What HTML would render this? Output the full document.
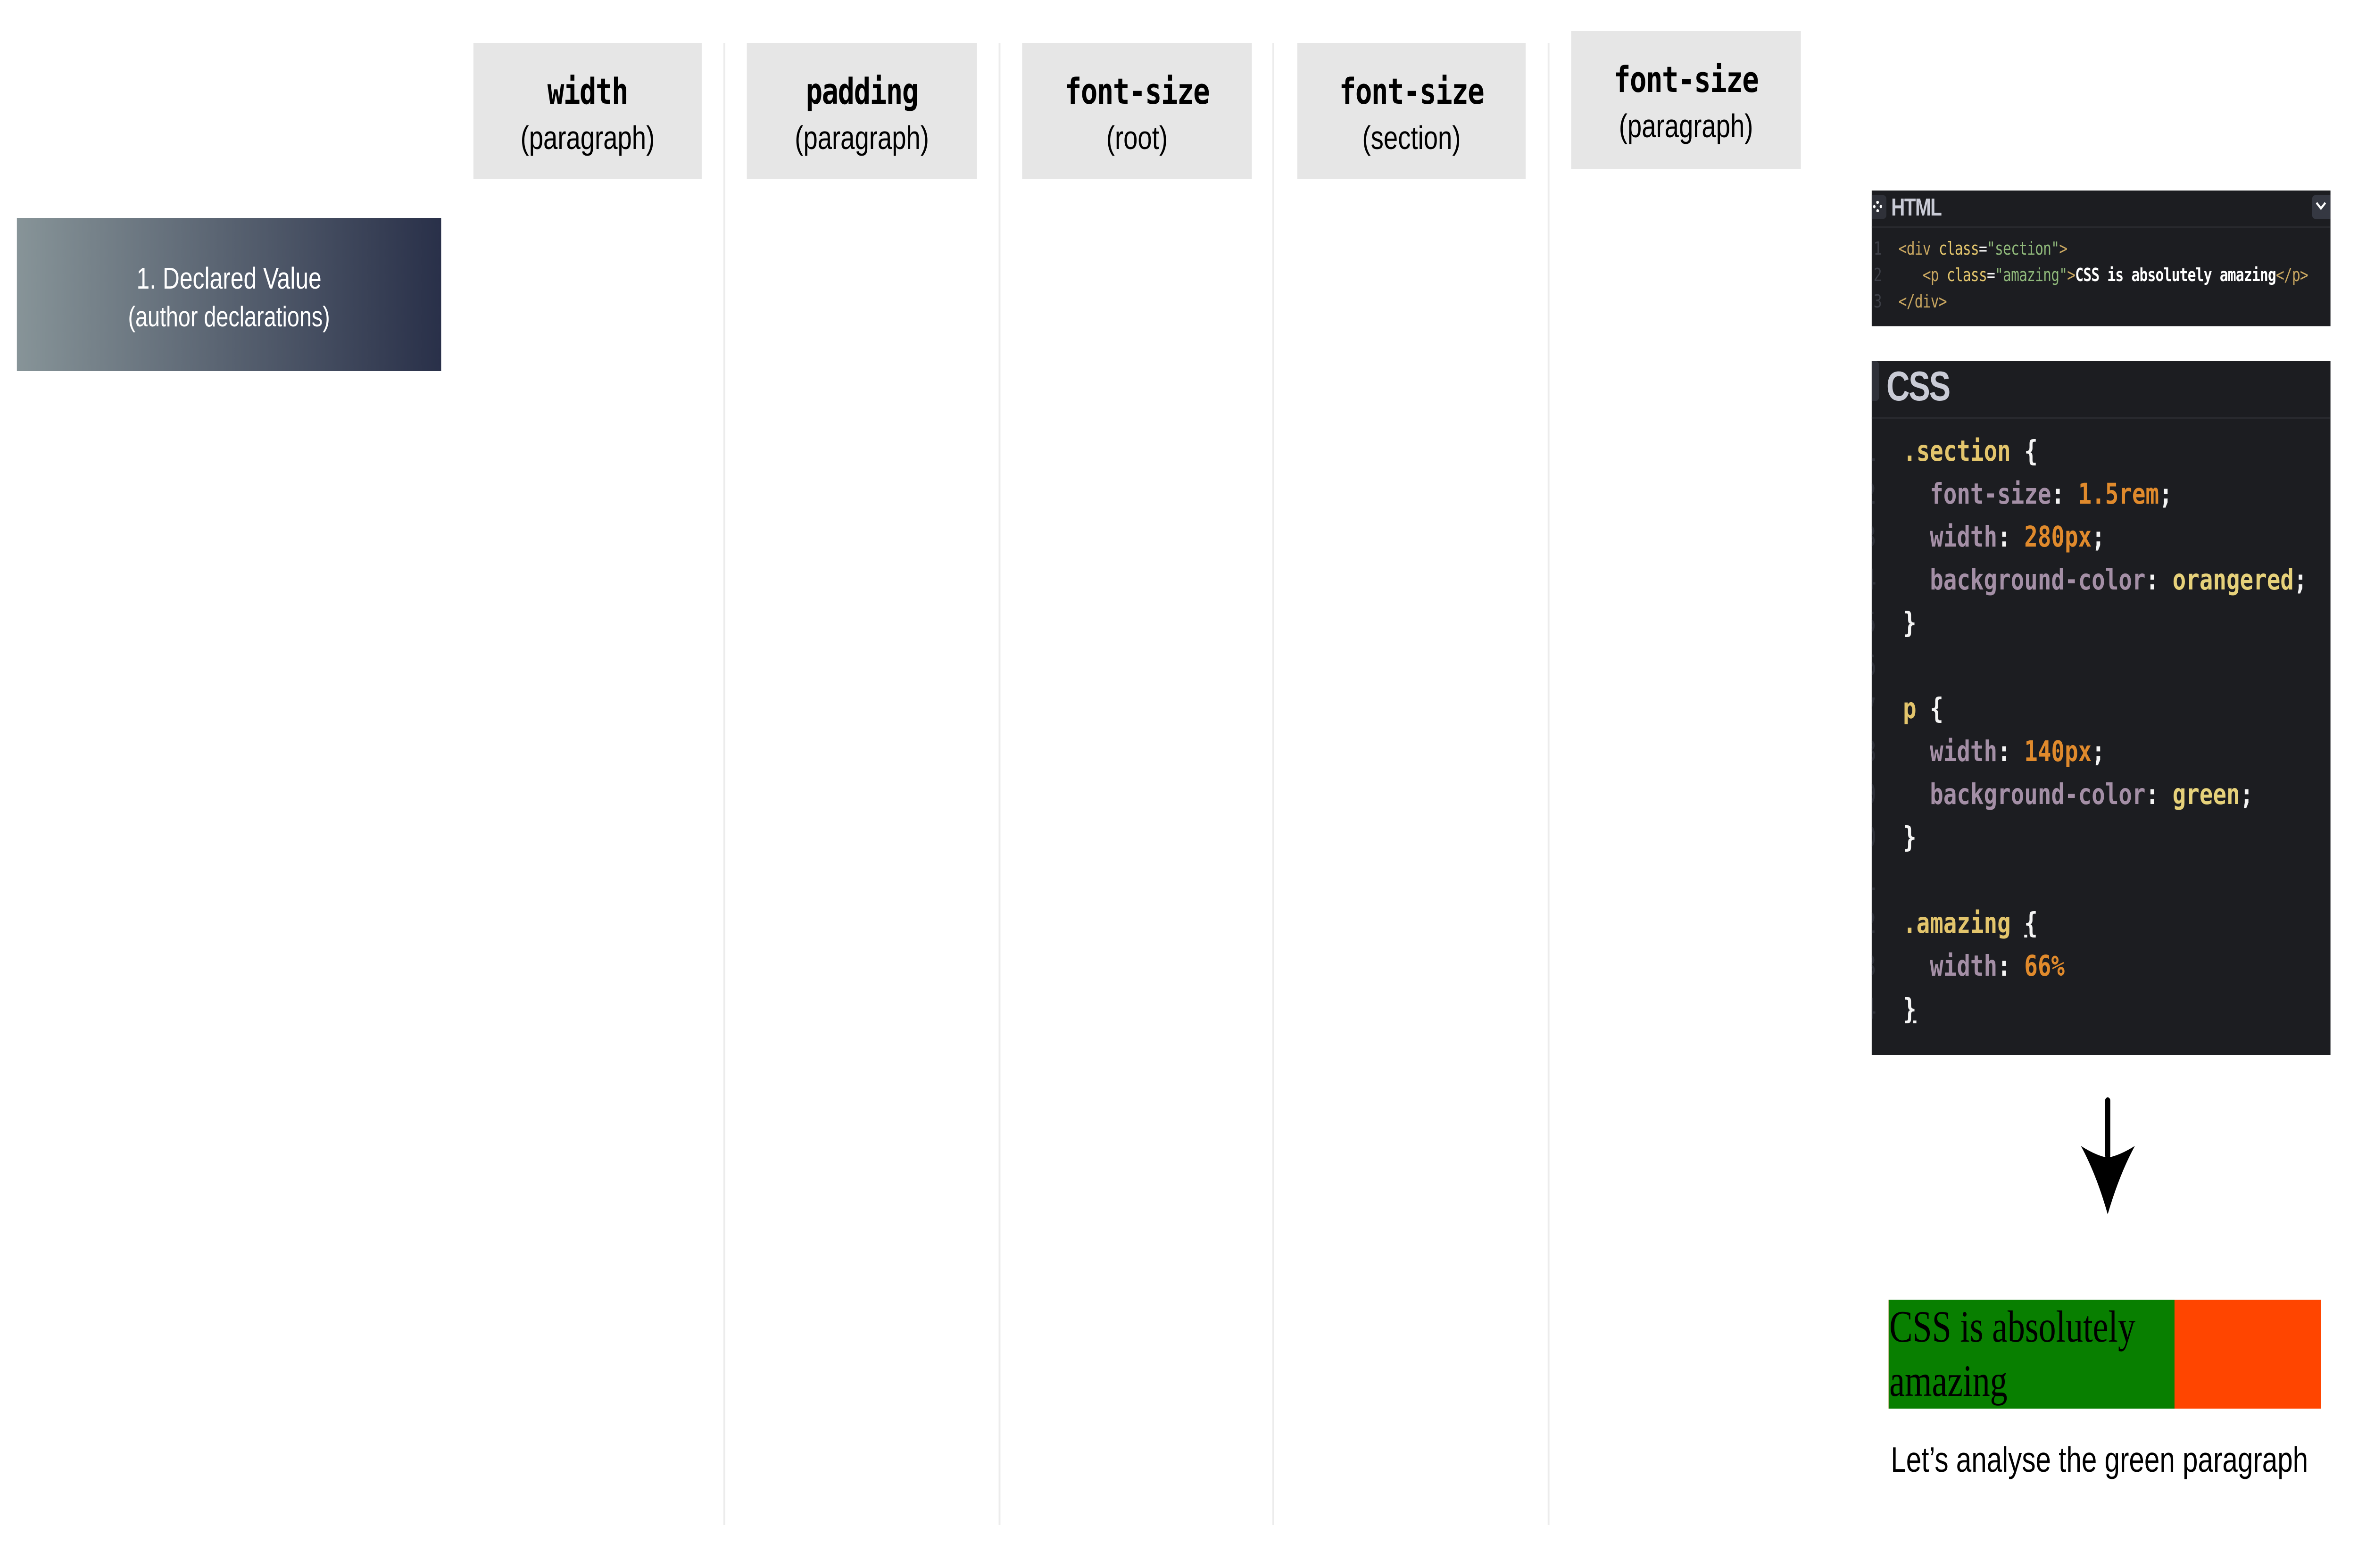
<!DOCTYPE html>
<html><head><meta charset="utf-8"><style>
*{margin:0;padding:0;box-sizing:border-box}
html,body{width:100%;height:100%;overflow:hidden;background:#fff}
#stage{position:fixed;left:0;top:0;width:100vw;height:100vh;display:block}
#pg{width:6425px;height:3325px;background:#fff;position:relative;overflow:hidden;font-family:"Liberation Sans",sans-serif}
.a{position:absolute}
.hd{position:absolute;background:#e6e6e6;text-align:center;color:#000}
.hd .t{position:absolute;left:0;right:0;top:58px;font:bold 76px "DejaVu Sans Mono","Liberation Mono",monospace;line-height:90px;letter-spacing:-2px}
.hd .s{position:absolute;left:0;right:0;top:156px;font-size:70px;line-height:90px}
.dv{position:absolute;top:91px;height:3143px;width:5px;background:#ececec}
pre{font-family:"DejaVu Sans Mono","Liberation Mono",monospace;white-space:pre;position:absolute}
.y{color:#e3c56c}.p{color:#a48fa6}.n{color:#e08a2c}.w{color:#f4f4f4}.k{color:#e6d17a}
.tg{color:#c8a660}.at{color:#e3c56c}.st{color:#8fb87a}.tx{color:#fff;font-weight:bold}
</style></head><body>
<svg id="stage" xmlns="http://www.w3.org/2000/svg" viewBox="0 0 6425 3325" preserveAspectRatio="none">
<foreignObject x="0" y="0" width="6425" height="3325">
<div xmlns="http://www.w3.org/1999/xhtml" id="pg">

<div class="a" style="left:46px;top:462px;width:1156px;height:325px;background:linear-gradient(90deg,#879498,#293049);color:#fff;text-align:center">
<div class="a" style="left:0;right:0;top:88px;font-size:64px;line-height:80px">1. Declared Value</div>
<div class="a" style="left:0;right:0;top:170px;font-size:60px;line-height:80px">(author declarations)</div>
</div>

<div class="hd" style="left:1290px;top:91px;width:622px;height:288px"><div class="t">width</div><div class="s">(paragraph)</div></div>
<div class="hd" style="left:2035px;top:91px;width:627px;height:288px"><div class="t">padding</div><div class="s">(paragraph)</div></div>
<div class="hd" style="left:2785px;top:91px;width:626px;height:288px"><div class="t">font-size</div><div class="s">(root)</div></div>
<div class="hd" style="left:3535px;top:91px;width:622px;height:288px"><div class="t">font-size</div><div class="s">(section)</div></div>
<div class="hd" style="left:4281px;top:66px;width:626px;height:292px"><div class="t">font-size</div><div class="s">(paragraph)</div></div>

<div class="dv" style="left:1971px"></div>
<div class="dv" style="left:2721px"></div>
<div class="dv" style="left:3467px"></div>
<div class="dv" style="left:4217px"></div>

<div class="a" style="left:5100px;top:404px;width:1250px;height:288px;background:#1c1d21;overflow:hidden">
<div class="a" style="left:0;top:10px;width:40px;height:50px;background:#2f3139;border-radius:0 8px 8px 0"></div>
<div class="a" style="left:4px;top:22px;width:24px;height:24px;border-radius:50%;border:7px dotted #fff"></div>
<div class="a" style="left:53px;top:6px;font-weight:bold;font-size:52px;line-height:60px;color:#c9cbd6;letter-spacing:-2px">HTML</div>
<div class="a" style="left:1200px;top:10px;width:50px;height:50px;background:#353842;border-radius:8px 0 0 8px"></div>
<svg class="a" style="left:1208px;top:22px" width="36" height="24"><path d="M4 4 L16 16 L28 4" stroke="#fff" stroke-width="5" fill="none"/></svg>
<div class="a" style="left:0;top:76px;width:1250px;height:4px;background:#28292e"></div>
<pre style="left:5px;top:95px;font-size:38px;line-height:56px;color:#3b3d45">1
2
3</pre>
<div class="a" style="left:73px;top:95px;width:1170px;height:180px;overflow:hidden">
<pre style="left:0;top:0;font-size:38px;line-height:56px;letter-spacing:-1px"><span class="tg">&lt;div</span> <span class="at">class</span><span class="w">=</span><span class="st">"section"</span><span class="tg">&gt;</span>
   <span class="tg">&lt;p</span> <span class="at">class</span><span class="w">=</span><span class="st">"amazing"</span><span class="tg">&gt;</span><span class="tx">CSS is absolutely amazing</span><span class="tg">&lt;/p&gt;</span>
<span class="tg">&lt;/div&gt;</span></pre>
</div>
</div>

<div class="a" style="left:5100px;top:766px;width:1250px;height:1471px;background:#1c1d21;overflow:hidden">
<div class="a" style="left:0;top:0;width:20px;height:84px;background:#2f3139;border-radius:0 8px 8px 0"></div>
<div class="a" style="left:40px;top:8px;font-weight:bold;font-size:88px;line-height:90px;color:#c9cbd6;letter-spacing:-3px">CSS</div>
<div class="a" style="left:0;top:118px;width:1250px;height:4px;background:#28292e"></div>
<div class="a" style="left:0;top:145px;width:20px;height:1300px;overflow:hidden">
<pre style="left:-24px;top:0;font-size:61px;line-height:91px;color:#2e3038">1
2
3
4
5
6
7
8
9
0
1
2
3
4</pre>
</div>
<div class="a" style="left:85px;top:145px;width:1160px;height:1300px;overflow:hidden">
<pre style="left:0;top:0;font-size:61px;line-height:91px;font-weight:bold"><span class="y">.section</span> <span class="w">{</span>
  <span class="p">font-size</span><span class="w">:</span> <span class="n">1.5rem</span><span class="w">;</span>
  <span class="p">width</span><span class="w">:</span> <span class="n">280px</span><span class="w">;</span>
  <span class="p">background-color</span><span class="w">:</span> <span class="k">orangered</span><span class="w">;</span>
<span class="w">}</span>

<span class="y">p</span> <span class="w">{</span>
  <span class="p">width</span><span class="w">:</span> <span class="n">140px</span><span class="w">;</span>
  <span class="p">background-color</span><span class="w">:</span> <span class="k">green</span><span class="w">;</span>
<span class="w">}</span>

<span class="y">.amazing</span> <span class="w" style="text-decoration:underline">{</span>
  <span class="p">width</span><span class="w">:</span> <span class="n">66%</span>
<span class="w" style="text-decoration:underline">}</span></pre>
</div>
</div>

<svg class="a" style="left:5660px;top:2320px" width="170" height="270">
<line x1="83" y1="14" x2="83" y2="130" stroke="#000" stroke-width="14" stroke-linecap="round"/>
<path d="M10 110 Q50 130 83 135 Q116 130 157 110 Q115 170 83 255 Q52 170 10 110 Z" fill="#000"/>
</svg>

<div class="a" style="left:5146px;top:2756px;width:1178px;height:231px;background:#ff4500;overflow:hidden">
<div class="a" style="left:0;top:0;width:779px;height:231px;background:#087f00;font-family:'Liberation Serif',serif;font-size:95px;line-height:115px;color:#000;padding-left:2px;overflow:hidden">CSS is absolutely amazing</div>
</div>
<div class="a" style="left:5152px;top:3050px;width:1200px;font-size:75px;line-height:90px;color:#000;white-space:nowrap;overflow:hidden">Let’s analyse the green paragraph</div>

</div>
</foreignObject>
</svg>
</body></html>
